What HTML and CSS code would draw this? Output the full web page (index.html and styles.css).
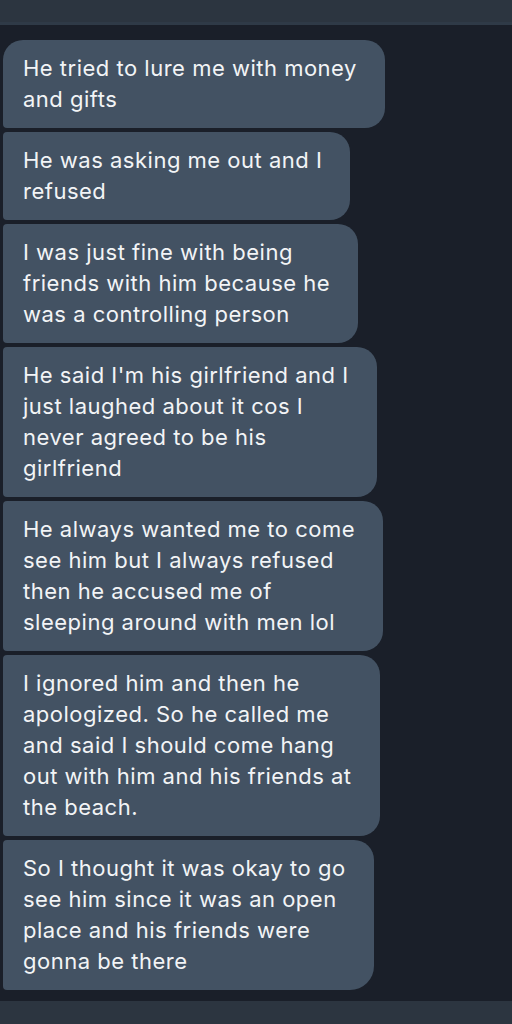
FILE: index.html
```html
<!DOCTYPE html>
<html>
<head>
<meta charset="utf-8">
<link rel="stylesheet" href="styles.css">
</head>
<body>
<div class="topbar"></div>
<div class="thread">
  <div class="bubble first">He tried to lure me with money<br>and gifts</div>
  <div class="bubble">He was asking me out and I<br>refused</div>
  <div class="bubble">I was just fine with being<br>friends with him because he<br>was a controlling person</div>
  <div class="bubble">He said I'm his girlfriend and I<br>just laughed about it cos I<br>never agreed to be his<br>girlfriend</div>
  <div class="bubble">He always wanted me to come<br>see him but I always refused<br>then he accused me of<br>sleeping around with men lol</div>
  <div class="bubble">I ignored him and then he<br>apologized. So he called me<br>and said I should come hang<br>out with him and his friends at<br>the beach.</div>
  <div class="bubble last">So I thought it was okay to go<br>see him since it was an open<br>place and his friends were<br>gonna be there</div>
</div>
<div class="bottombar"></div>
</body>
</html>
```
FILE: styles.css
```css
html, body {
  margin: 0;
  padding: 0;
}
body {
  width: 512px;
  height: 1024px;
  background: #1a1f29;
  display: flex;
  flex-direction: column;
  font-family: Inter, "Liberation Sans", sans-serif;
  overflow: hidden;
}
.topbar {
  height: 22px;
  background: #2c3540;
  border-bottom: 3px solid #2f3a47;
  flex: none;
}
.thread {
  flex: 1;
  display: flex;
  flex-direction: column;
  align-items: flex-start;
  gap: 4px;
  padding: 15px 0 0 3px;
}
.bubble {
  background: #435263;
  color: #f2f4f6;
  font-size: 22px;
  letter-spacing: 0.5px;
  line-height: 31px;
  padding: 13px 28px 13px 20px;
  border-radius: 4px 20px 20px 4px;
}
.bubble.first {
  border-top-left-radius: 20px;
}
.bubble.last {
  border-bottom-right-radius: 24px;
}
.bottombar {
  height: 23px;
  background: #2c3540;
  flex: none;
}
```
